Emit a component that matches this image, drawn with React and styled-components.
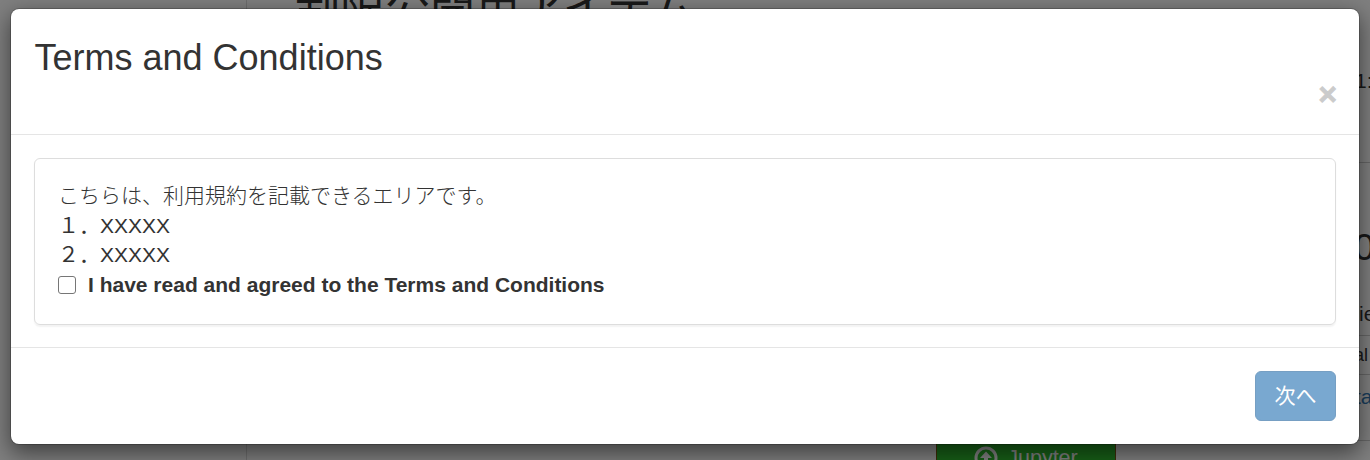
import React from "react";
import styled, { createGlobalStyle } from "styled-components";

const Global = createGlobalStyle`
  *, *::before, *::after { box-sizing: border-box; }
  html, body { margin: 0; height: 460px; overflow: hidden; }
  body {
    font-family: "Liberation Sans", "Noto Sans CJK JP", sans-serif;
    font-size: 21px;
    line-height: 30px;
    color: #333;
    background: #fff;
  }
`;

const Screen = styled.div`
  position: relative;
  width: 1370px;
  height: 460px;
  overflow: hidden;
`;

const Page = styled.div`
  display: grid;
  grid-template-columns: 247px 1067px 56px;
  height: 460px;
`;

const SideNav = styled.nav`
  border-right: 1px solid #ddd;
`;

const Main = styled.main`
  display: flex;
  flex-direction: column;
  justify-content: space-between;
  height: 460px;
  padding-left: 48px;
`;

const ItemTitle = styled.h1`
  margin: -21px 0 0;
  font-size: 45px;
  font-weight: 400;
  line-height: 60px;
  white-space: nowrap;
`;

const Launch = styled.button`
  display: flex;
  flex: none;
  align-items: center;
  justify-content: center;
  gap: 9px;
  width: 180px;
  height: 50px;
  margin: 0 0 -23px 641px;
  padding: 0;
  border: 1px solid #7a5a10;
  background: #2fbe2f;
  color: #fff;
  font: 21.5px/30px "Liberation Sans", sans-serif;
`;

const Aside = styled.aside`
  display: flex;
  flex-direction: column;
  width: 56px;
  height: 460px;
`;

const AsideRow = styled.div`
  display: flex;
  flex: none;
  align-items: flex-end;
  height: ${(p) => p.$h}px;
  padding: 0 0 ${(p) => p.$pb || 0}px ${(p) => p.$pl || 0}px;
  border-bottom: ${(p) => (p.$line ? "1px solid #ccc" : "0")};
  font-size: ${(p) => p.$size || 21}px;
  line-height: 1;
  color: ${(p) => (p.$link ? "#337ab7" : "#333")};
  white-space: nowrap;
`;

const Backdrop = styled.div`
  position: absolute;
  inset: 0;
  padding: 8px 10px 15px;
  background: rgba(0, 0, 0, 0.5);
`;

const Dialog = styled.section`
  display: flex;
  flex-direction: column;
  height: 437px;
  border: 1px solid rgba(0, 0, 0, 0.2);
  border-radius: 9px;
  background: #fff;
  background-clip: padding-box;
  box-shadow: 0 7.5px 22.5px rgba(0, 0, 0, 0.5);
`;

const Header = styled.header`
  display: flex;
  flex: none;
  flex-direction: column;
  height: 126px;
  padding: 29px 22px 0 23.5px;
  border-bottom: 1px solid #e5e5e5;
`;

const Title = styled.h3`
  margin: 0;
  font-size: 36px;
  font-weight: 400;
  line-height: 40px;
`;

const Close = styled.button`
  align-self: flex-end;
  padding: 0;
  border: 0;
  background: none;
  color: #000;
  opacity: 0.2;
  font: 700 31.5px/32px "Liberation Sans", sans-serif;
  -webkit-text-stroke: 1px #000;
`;

const Body = styled.div`
  flex: none;
  height: 213px;
  padding: 23px 23px 22px;
  border-bottom: 1px solid #e5e5e5;
`;

const Panel = styled.div`
  height: 167px;
  padding: 22px 23px;
  border: 1px solid #ddd;
  border-radius: 6px;
  box-shadow: 0 1.5px 1.5px rgba(0, 0, 0, 0.05);
`;

const TermsText = styled.p`
  margin: 0;
  font-weight: ${(p) => (p.$light ? 300 : 400)};
  line-height: 29.5px;
  white-space: nowrap;
`;

const Agree = styled.label`
  display: flex;
  align-items: center;
  gap: 12px;
  height: 30px;
  font-weight: 700;
`;

const Check = styled.input`
  appearance: none;
  width: 18px;
  height: 18px;
  margin: 0;
  border: 1.5px solid #767676;
  border-radius: 3px;
  background: #fff;
`;

const Footer = styled.footer`
  display: flex;
  justify-content: flex-end;
  padding: 23px;
`;

const Next = styled.button`
  width: 81px;
  height: 50px;
  padding: 0;
  border: 1px solid #2e6da4;
  border-radius: 6px;
  background: #337ab7;
  color: #fff;
  opacity: 0.65;
  font: 21px/30px "Liberation Sans", "Noto Sans CJK JP", sans-serif;
`;

const UploadIcon = () => (
  <svg width="24" height="24" viewBox="0 0 24 24">
    <circle cx="12" cy="12" r="10" fill="none" stroke="#fff" strokeWidth="3" />
    <path d="M12 5.5 18 12h-4v6h-4v-6H6z" fill="#fff" />
  </svg>
);

export default function App() {
  return (
    <Screen>
      <Global />
      <Page aria-hidden="true">
        <SideNav />
        <Main>
          <ItemTitle>制限公開用アイテム</ItemTitle>
          <Launch>
            <UploadIcon />
            Jupyter
          </Launch>
        </Main>
        <Aside>
          <AsideRow $h={163} $line $pl={41} $pb={71}>1:</AsideRow>
          <AsideRow $h={103} $pl={40} $size={37}>0</AsideRow>
          <AsideRow $h={70} $line $pl={45} $pb={11}>ie</AsideRow>
          <AsideRow $h={39} $line $pl={40} $pb={10} $size={18}>al</AsideRow>
          <AsideRow $h={66} $line $pl={41} $pb={33} $link>ta</AsideRow>
        </Aside>
      </Page>
      <Backdrop>
        <Dialog role="dialog">
          <Header>
            <Title>Terms and Conditions</Title>
            <Close aria-label="Close">×</Close>
          </Header>
          <Body>
            <Panel>
              <TermsText $light>こちらは、利用規約を記載できるエリアです。</TermsText>
              <TermsText>１．XXXXX</TermsText>
              <TermsText>２．XXXXX</TermsText>
              <Agree>
                <Check type="checkbox" />
                I have read and agreed to the Terms and Conditions
              </Agree>
            </Panel>
          </Body>
          <Footer>
            <Next>次へ</Next>
          </Footer>
        </Dialog>
      </Backdrop>
    </Screen>
  );
}
